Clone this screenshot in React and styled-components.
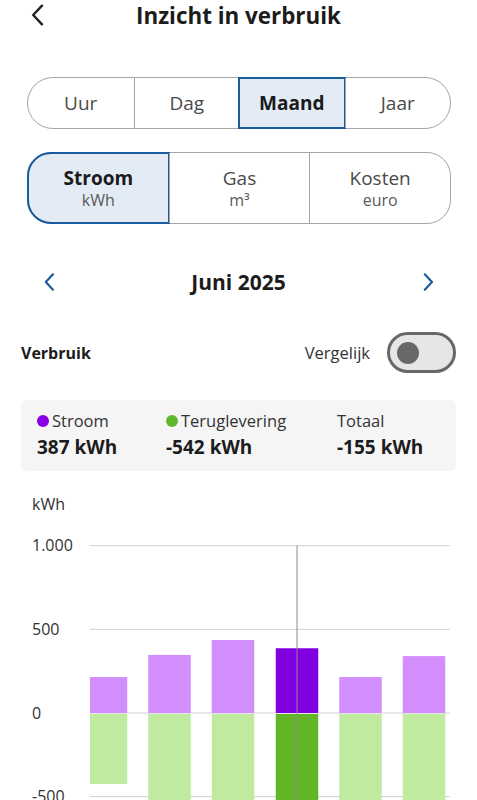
import React from "react";
import styled, { createGlobalStyle } from "styled-components";

const Global = createGlobalStyle`
  html, body { margin: 0; padding: 0; background: #fff; overflow: hidden; }
  body { font-family: "Open Sans", "Noto Sans", sans-serif; color: #222; }
  * { box-sizing: border-box; }
`;

const BLUE = "#1a5a9e";
const LINE = "#a5a5a5";

const Page = styled.div`
  width: 477px;
  height: 800px;
  overflow: hidden;
  display: flex;
  flex-direction: column;
`;

const Header = styled.header`
  display: grid;
  grid-template-columns: 1fr auto 1fr;
  align-items: center;
  height: 30px;
  padding: 2px 31px 0 31px;
`;

const BackButton = styled.button`
  border: 0;
  background: none;
  padding: 0;
  width: 20px;
  height: 28px;
  display: flex;
  align-items: center;
  justify-self: start;
  position: relative;
  top: -1px;
`;

const Title = styled.h1`
  margin: 0;
  font-size: 22.4px;
  line-height: 28px;
  font-weight: 700;
  color: #1c1c1c;
`;

const Segmented = styled.div`
  display: grid;
  grid-template-columns: repeat(${(p) => p.$count}, 1fr);
  margin: ${(p) => p.$top}px 26px 0 27px;
  height: ${(p) => p.$height}px;
  border: 1px solid ${LINE};
  border-radius: ${(p) => p.$radius}px;
`;

const Segment = styled.button`
  font-family: inherit;
  display: flex;
  flex-direction: column;
  align-items: center;
  justify-content: center;
  padding: 0;
  background: ${(p) => (p.$active ? "#e3ebf5" : "transparent")};
  border: 0;
  border-left: ${(p) => (p.$first ? "0" : `1px solid ${LINE}`)};
  border-radius: ${(p) =>
    p.$first ? `${p.$radius}px 0 0 ${p.$radius}px` : p.$last ? `0 ${p.$radius}px ${p.$radius}px 0` : "0"};
  ${(p) =>
    p.$active &&
    `
    margin: -1px;
    border: 2px solid ${BLUE};
  `}
`;

const SegLabel = styled.span`
  font-size: 19px;
  line-height: 24px;
  font-weight: ${(p) => (p.$active ? 700 : 400)};
  color: ${(p) => (p.$active ? "#1a1a1a" : "#4a4a4a")};
`;

const SegUnit = styled.span`
  font-size: 16px;
  line-height: 21px;
  color: #5a5a5a;
`;

const MonthNav = styled.div`
  display: flex;
  align-items: center;
  justify-content: space-between;
  margin: 38px 40px 0 40px;
  height: 40px;
`;

const NavButton = styled.button`
  border: 0;
  background: none;
  padding: 0;
  width: 18px;
  height: 24px;
  display: flex;
  align-items: center;
  justify-content: center;
`;

const Month = styled.h2`
  margin: 0;
  font-size: 21px;
  font-weight: 700;
  color: #1c1c1c;
  line-height: 28px;
`;

const UsageRow = styled.div`
  display: flex;
  align-items: center;
  justify-content: space-between;
  margin: 30px 21px 0 21px;
  height: 41px;
`;

const SectionTitle = styled.span`
  font-size: 16px;
  font-weight: 700;
  color: #1c1c1c;
`;

const CompareGroup = styled.label`
  display: flex;
  align-items: center;
  gap: 17px;
  font-size: 16.5px;
  color: #333;
`;

const Toggle = styled.span`
  width: 69px;
  height: 41px;
  border: 3px solid #686868;
  border-radius: 21px;
  background: #e6e6e6;
  display: flex;
  align-items: center;
  padding-left: 7px;
`;

const Knob = styled.span`
  width: 22px;
  height: 22px;
  border-radius: 50%;
  background: #686868;
`;

const Summary = styled.div`
  display: grid;
  grid-template-columns: 129px 171px 1fr;
  margin: 27px 21px 0 21px;
  height: 71px;
  background: #f5f5f5;
  border-radius: 6px;
  padding: 8px 0 0 16px;
`;

const SummaryItem = styled.div`
  display: flex;
  flex-direction: column;
`;

const SummaryLabel = styled.span`
  display: flex;
  align-items: center;
  gap: 3px;
  font-size: 16.5px;
  line-height: 25px;
  color: #333;
`;

const Dot = styled.span`
  width: 12px;
  height: 12px;
  border-radius: 50%;
  background: ${(p) => p.$color};
`;

const SummaryValue = styled.span`
  font-size: 19px;
  line-height: 28px;
  font-weight: 700;
  color: #1c1c1c;
`;

const ChartUnit = styled.div`
  margin: 23px 0 0 32px;
  font-size: 16px;
  line-height: 20px;
  color: #333;
`;

const ChartSvg = styled.svg`
  display: block;
`;

const Chevron = ({ dir = "left", color, w = 2.4, size = 20 }) => (
  <svg width={size * 0.6} height={size} viewBox="0 0 12 20">
    <path
      d={dir === "left" ? "M10 1.5 L2 10 L10 18.5" : "M2 1.5 L10 10 L2 18.5"}
      fill="none"
      stroke={color}
      strokeWidth={w}
      strokeLinecap="round"
      strokeLinejoin="round"
    />
  </svg>
);

const periods = ["Uur", "Dag", "Maand", "Jaar"];
const kinds = [
  { label: "Stroom", unit: "kWh" },
  { label: "Gas", unit: "m³" },
  { label: "Kosten", unit: "euro" },
];

const bars = [
  { x: 106, up: 215, down: -424 },
  { x: 169.5, up: 347, down: -700 },
  { x: 233, up: 436, down: -700 },
  { x: 297, up: 387, down: -700, active: true },
  { x: 360.5, up: 215, down: -700 },
  { x: 424, up: 340, down: -700 },
];

const ZERO = 199;
const SCALE = 83.65 / 500;
const yOf = (v) => ZERO - v * SCALE;

function Chart() {
  const grid = [1000, 500, 0, -500];
  const labels = ["1.000", "500", "0", "-500"];
  const W = 42.5;
  return (
    <ChartSvg width="477" height="286" viewBox="0 0 477 286">
      <defs>
        <clipPath id="plot">
          <rect x="90" y="0" width="365" height="286" />
        </clipPath>
      </defs>
      {grid.map((v, i) => (
        <g key={v}>
          <text x="32" y={yOf(v) + 5.5} fontSize="16" fill="#333" fontFamily="Open Sans, sans-serif">
            {labels[i]}
          </text>
          <line x1="90" x2="450" y1={yOf(v)} y2={yOf(v)} stroke="#cfcfcf" strokeWidth="1" />
        </g>
      ))}
      <g clipPath="url(#plot)">
        {bars.map((b) => (
          <g key={b.x}>
            <rect
              x={b.x - W / 2}
              y={yOf(b.up)}
              width={W}
              height={b.up * SCALE}
              fill={b.active ? "#8000e0" : "#d18efc"}
            />
            <rect
              x={b.x - W / 2}
              y={ZERO + 1}
              width={W}
              height={-b.down * SCALE - 1}
              fill={b.active ? "#62b526" : "#bfeaa0"}
            />
          </g>
        ))}
      </g>
      <line x1="297" x2="297" y1={yOf(1000)} y2="286" stroke="#8a8a8a" strokeWidth="1" />
    </ChartSvg>
  );
}

export default function App() {
  return (
    <>
      <Global />
      <Page>
        <Header>
          <BackButton aria-label="Terug">
            <Chevron dir="left" color="#222" w={2.2} size={22} />
          </BackButton>
          <Title>Inzicht in verbruik</Title>
          <span />
        </Header>

        <Segmented $count={4} $top={47} $height={52} $radius={26}>
          {periods.map((p, i) => (
            <Segment
              key={p}
              $active={p === "Maand"}
              $first={i === 0}
              $last={i === periods.length - 1}
              $radius={26}
            >
              <SegLabel $active={p === "Maand"}>{p}</SegLabel>
            </Segment>
          ))}
        </Segmented>

        <Segmented $count={3} $top={23} $height={72} $radius={24}>
          {kinds.map((k, i) => (
            <Segment
              key={k.label}
              $active={i === 0}
              $first={i === 0}
              $last={i === kinds.length - 1}
              $radius={24}
            >
              <SegLabel $active={i === 0}>{k.label}</SegLabel>
              <SegUnit>{k.unit}</SegUnit>
            </Segment>
          ))}
        </Segmented>

        <MonthNav>
          <NavButton aria-label="Vorige">
            <Chevron dir="left" color={BLUE} w={2.4} size={18} />
          </NavButton>
          <Month>Juni 2025</Month>
          <NavButton aria-label="Volgende">
            <Chevron dir="right" color={BLUE} w={2.4} size={18} />
          </NavButton>
        </MonthNav>

        <UsageRow>
          <SectionTitle>Verbruik</SectionTitle>
          <CompareGroup>
            Vergelijk
            <Toggle>
              <Knob />
            </Toggle>
          </CompareGroup>
        </UsageRow>

        <Summary>
          <SummaryItem>
            <SummaryLabel>
              <Dot $color="#8a00e6" />
              Stroom
            </SummaryLabel>
            <SummaryValue>387 kWh</SummaryValue>
          </SummaryItem>
          <SummaryItem>
            <SummaryLabel>
              <Dot $color="#62b82c" />
              Teruglevering
            </SummaryLabel>
            <SummaryValue>-542 kWh</SummaryValue>
          </SummaryItem>
          <SummaryItem>
            <SummaryLabel>Totaal</SummaryLabel>
            <SummaryValue>-155 kWh</SummaryValue>
          </SummaryItem>
        </Summary>

        <ChartUnit>kWh</ChartUnit>
        <Chart />
      </Page>
    </>
  );
}
